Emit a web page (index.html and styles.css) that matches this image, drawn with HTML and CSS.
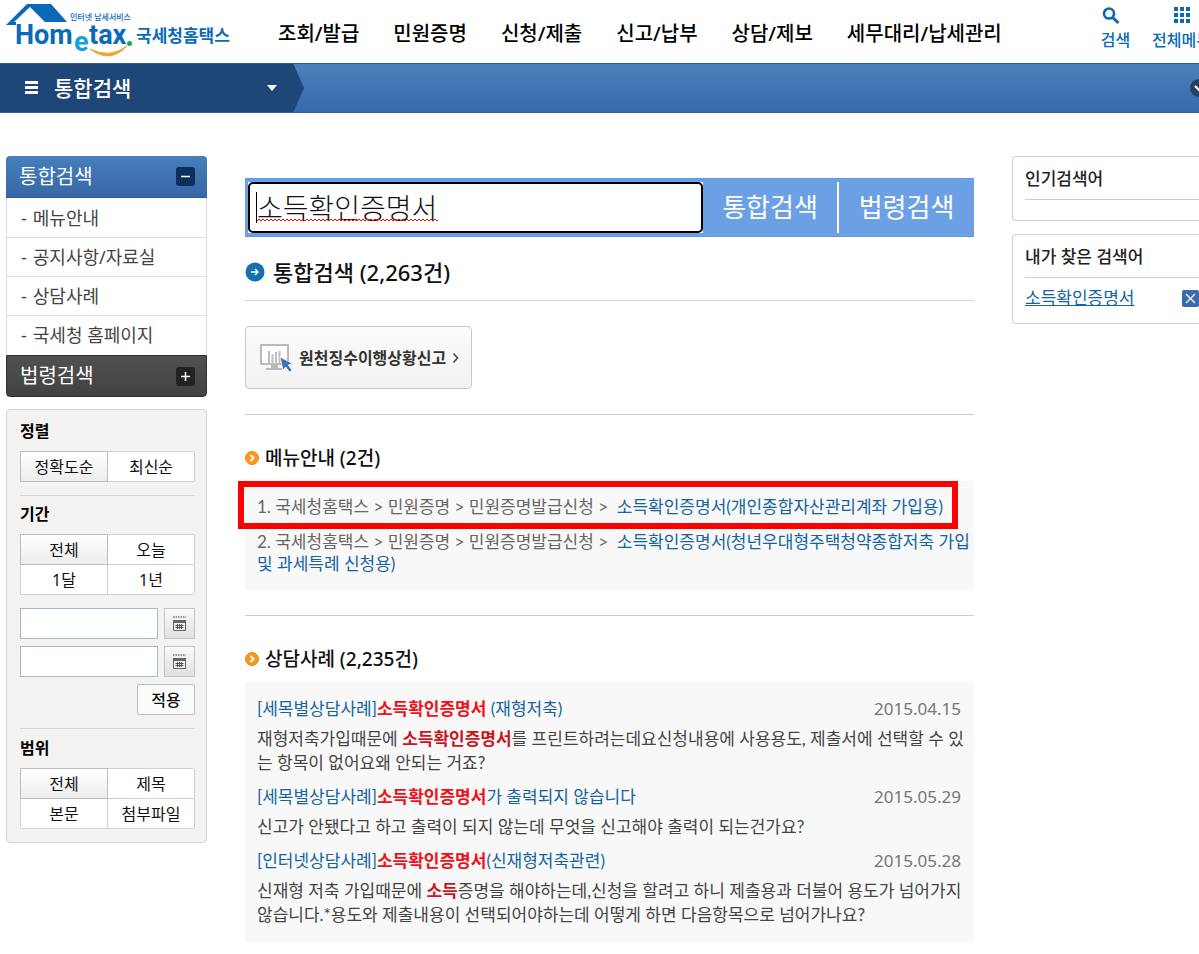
FILE: index.html
```html
<!DOCTYPE html>
<html lang="ko">
<head>
<meta charset="utf-8">
<meta name="viewport" content="width=device-width, initial-scale=1">
<title>통합검색 - 국세청홈택스</title>
<link rel="stylesheet" href="styles.css">
</head>
<body>
<header class="top">
  <a class="logo" href="#" aria-label="국세청홈택스">
    <svg width="236" height="60" viewBox="0 0 236 60">
      <path d="M6 25 L27 4 H51 L67 22 H45 L30 7 L14 22 H16 V25Z" fill="#0a6ab8"/>
      <text class="logo-tag" x="70" y="20">인터넷 납세서비스</text>
      <text class="logo-word" x="15" y="44">Hom</text>
      <text class="logo-e" x="74" y="51">e</text>
      <text class="logo-word" x="89" y="44">tax</text>
      <circle cx="129.500" cy="43.500" r="2.500" fill="#1fa84c"/>
      <path d="M90 49 Q110 64 127 46 Q110 59 90 49Z" fill="#f6a02c" stroke="#f6a02c" stroke-width="1"/>
      <text class="logo-name" x="136" y="42">국세청홈택스</text>
    </svg>
  </a>
  <nav class="gnb">
    <a href="#">조회/발급</a>
    <a href="#">민원증명</a>
    <a href="#">신청/제출</a>
    <a href="#">신고/납부</a>
    <a href="#">상담/제보</a>
    <a href="#">세무대리/납세관리</a>
  </nav>
  <div class="tools">
    <a href="#" class="tool">
      <svg width="20" height="20" viewBox="0 0 20 20" fill="none" stroke="#0a6ab8"><circle cx="8" cy="7.500" r="5" stroke-width="2.600"/><path d="M11.500 11.500 L17.500 17" stroke-width="3"/></svg>
      <span>검색</span>
    </a>
    <a href="#" class="tool">
      <svg width="20" height="20" viewBox="0 0 20 20" fill="#0a6ab8"><path d="M2 1h4v4H2zM8 1h4v4H8zM14 1h4v4h-4zM2 7h4v4H2zM8 7h4v4H8zM14 7h4v4h-4zM2 13h4v4H2zM8 13h4v4H8zM14 13h4v4h-4z"/></svg>
      <span>전체메뉴</span>
    </a>
  </div>
</header>

<div class="crumb">
  <button class="crumb-menu" type="button">
    <svg width="13" height="14" viewBox="0 0 13 14" fill="#fff"><path d="M0 0h13v3H0zM0 5h13v3H0zM0 10h13v3H0z"/></svg>
    <span>통합검색</span>
    <svg class="caret" width="10" height="6" viewBox="0 0 10 6" fill="#fff"><path d="M0 0h10L5 6z"/></svg>
  </button>
  <button class="crumb-toggle" type="button" aria-label="펼치기">
    <svg width="18" height="18" viewBox="0 0 18 18"><circle cx="9" cy="9" r="9" fill="#23405f"/><path d="M5 7l4 4 4-4" fill="none" stroke="#fff" stroke-width="2"/></svg>
  </button>
</div>

<div class="page">
  <aside class="side">
    <nav class="lnb">
      <h2 class="lnb-head">통합검색
        <button type="button" class="fold" aria-label="접기"><svg width="19" height="19" viewBox="0 0 19 19"><path d="M5 9.500h9" stroke="#fff" stroke-width="1.500"/></svg></button>
      </h2>
      <ul>
        <li><a href="#">메뉴안내</a></li>
        <li><a href="#">공지사항/자료실</a></li>
        <li><a href="#">상담사례</a></li>
        <li><a href="#">국세청 홈페이지</a></li>
      </ul>
      <h2 class="lnb-head lnb-dark">법령검색
        <button type="button" class="fold" aria-label="펼치기"><svg width="19" height="19" viewBox="0 0 19 19"><path d="M5 9.500h9M9.500 5v9" stroke="#fff" stroke-width="1.500"/></svg></button>
      </h2>
    </nav>

    <form class="filter">
      <section>
        <h3>정렬</h3>
        <div class="choices">
          <button type="button" class="on">정확도순</button><button type="button">최신순</button>
        </div>
      </section>
      <section>
        <h3>기간</h3>
        <div class="choices">
          <button type="button" class="on">전체</button><button type="button">오늘</button>
          <button type="button">1달</button><button type="button">1년</button>
        </div>
        <div class="date-row">
          <input type="text" aria-label="시작일">
          <button type="button" class="cal" aria-label="시작일 선택"><svg width="15" height="16" viewBox="0 0 15 16"><path d="M1 1h13" stroke="#777" stroke-width="1.500" stroke-dasharray="1.500 1"/><path d="M1.500 4.500h12v10h-12z" fill="#eee" stroke="#666"/><path d="M1 4h13v3H1z" fill="#666"/><path d="M3.500 9.500h8M3.500 11.500h8M5.500 8v5M7.500 8v5M9.500 8v5" stroke="#555" stroke-width="1"/></svg></button>
        </div>
        <div class="date-row">
          <input type="text" aria-label="종료일">
          <button type="button" class="cal" aria-label="종료일 선택"><svg width="15" height="16" viewBox="0 0 15 16"><path d="M1 1h13" stroke="#777" stroke-width="1.500" stroke-dasharray="1.500 1"/><path d="M1.500 4.500h12v10h-12z" fill="#eee" stroke="#666"/><path d="M1 4h13v3H1z" fill="#666"/><path d="M3.500 9.500h8M3.500 11.500h8M5.500 8v5M7.500 8v5M9.500 8v5" stroke="#555" stroke-width="1"/></svg></button>
        </div>
        <button type="button" class="apply">적용</button>
      </section>
      <section>
        <h3>범위</h3>
        <div class="choices">
          <button type="button" class="on">전체</button><button type="button">제목</button>
          <button type="button">본문</button><button type="button">첨부파일</button>
        </div>
      </section>
    </form>
  </aside>

  <main class="content">
    <form class="search">
      <div class="field">
        <input type="text" value="소득확인증명서" aria-label="검색어" spellcheck="false">
        <svg class="squiggle" width="181" height="4"><defs><pattern id="wave" width="4" height="4" patternUnits="userSpaceOnUse"><path d="M0 3L2 1L4 3" fill="none" stroke="#f00" stroke-width="1"/></pattern></defs><rect width="181" height="4" fill="url(#wave)"/></svg>
        <span class="cursor"></span>
      </div>
      <button type="submit">통합검색</button>
      <button type="button">법령검색</button>
    </form>

    <h1>
      <svg width="20" height="20" viewBox="0 0 20 20"><circle cx="10" cy="10" r="9.500" fill="#1670b0"/><path d="M6 10h7M10 7l3 3-3 3" fill="none" stroke="#fff" stroke-width="1.500"/></svg>
      <span>통합검색 (2,263건)</span>
    </h1>

    <div class="shortcut-row">
      <button type="button" class="shortcut">
        <svg width="34" height="30" viewBox="0 0 34 30"><path d="M2 2h27v19H2z" fill="#fff" stroke="#b9b9b9" stroke-width="2" stroke-linejoin="round"/><path d="M10 8v13M13.500 11v10M17 9v12M20.500 8v13" stroke="#bdbdbd" stroke-width="2"/><path d="M12 22h7v3h-7zM7 25h16v2H7z" fill="#b9b9b9"/><path d="M21 14l3 13 2.800-3 3.700 5 2.500-2-3.800-5 4.200-1.500z" fill="#3b74b8" stroke="#fff" stroke-width=".7"/></svg>
        <span>원천징수이행상황신고</span>
        <svg width="8" height="12" viewBox="0 0 8 12"><path d="M1.500 1.500l4 4.500-4 4.500" fill="none" stroke="#444" stroke-width="1.500"/></svg>
      </button>
    </div>

    <section class="group">
      <h2><svg width="14" height="14" viewBox="0 0 14 14"><circle cx="7" cy="7" r="6.500" fill="#f8981d" stroke="#e9870f"/><path d="M5.500 4l3 3-3 3" fill="none" stroke="#fff" stroke-width="1.800"/></svg><span>메뉴안내 (2건)</span></h2>
      <ol class="panel menus">
        <li>1. 국세청홈택스 &gt; 민원증명 &gt; 민원증명발급신청 &gt;&nbsp; <a href="#">소득확인증명서(개인종합자산관리계좌 가입용)</a></li>
        <li>2. 국세청홈택스 &gt; 민원증명 &gt; 민원증명발급신청 &gt;&nbsp; <a href="#">소득확인증명서(청년우대형주택청약종합저축 가입 및 과세특례 신청용)</a></li>
        <li class="marker" aria-hidden="true"></li>
      </ol>
    </section>

    <section class="group">
      <h2><svg width="14" height="14" viewBox="0 0 14 14"><circle cx="7" cy="7" r="6.500" fill="#f8981d" stroke="#e9870f"/><path d="M5.500 4l3 3-3 3" fill="none" stroke="#fff" stroke-width="1.800"/></svg><span>상담사례 (2,235건)</span></h2>
      <div class="panel cases">
        <article>
          <div class="case-head"><a href="#">[세목별상담사례]<b>소득확인증명서</b> (재형저축)</a><time>2015.04.15</time></div>
          <p>재형저축가입때문에 <b>소득확인증명서</b>를 프린트하려는데요신청내용에 사용용도, 제출서에 선택할 수 있는 항목이 없어요왜 안되는 거죠?</p>
        </article>
        <article>
          <div class="case-head"><a href="#">[세목별상담사례]<b>소득확인증명서</b>가 출력되지 않습니다</a><time>2015.05.29</time></div>
          <p>신고가 안됐다고 하고 출력이 되지 않는데 무엇을 신고해야 출력이 되는건가요?</p>
        </article>
        <article>
          <div class="case-head"><a href="#">[인터넷상담사례]<b>소득확인증명서</b>(신재형저축관련)</a><time>2015.05.28</time></div>
          <p>신재형 저축 가입때문에 <b>소득</b>증명을 해야하는데,신청을 할려고 하니 제출용과 더불어 용도가 넘어가지 않습니다.*용도와 제출내용이 선택되어야하는데 어떻게 하면 다음항목으로 넘어가나요?</p>
        </article>
      </div>
    </section>
  </main>

  <aside class="words">
    <section class="card">
      <h3>인기검색어</h3>
    </section>
    <section class="card">
      <h3>내가 찾은 검색어</h3>
      <div class="word"><a href="#">소득확인증명서</a>
        <button type="button" aria-label="삭제"><svg width="17" height="17" viewBox="0 0 17 17"><rect width="17" height="17" rx="2" fill="#3a6cab"/><path d="M4 4l9 9M13 4l-9 9" stroke="#fff" stroke-width="1.200"/></svg></button>
      </div>
    </section>
  </aside>
</div>
</body>
</html>
```
FILE: styles.css
```css
* { box-sizing: border-box; }
body {
  margin: 0;
  background: #fff;
  color: #333;
  font: 17px/24px "Noto Sans", "Noto Sans CJK KR", sans-serif;
  overflow-x: hidden;
}
h1, h2, h3, p, ul, ol { margin: 0; padding: 0; }
ul, ol { list-style: none; }
a { color: inherit; text-decoration: none; }
button, input { font: inherit; color: inherit; margin: 0; padding: 0; }
button { border: 0; background: none; cursor: pointer; }
svg { display: block; flex: none; }

/* Header */
.top { display: flex; height: 63px; overflow: hidden; white-space: nowrap; }
.logo { flex: none; width: 278px; }
.logo-tag { font-size: 8px; font-weight: 500; fill: #0a6ab8; }
.logo-word { font: 700 27px Roboto, sans-serif; fill: #0a6ab8; }
.logo-e { font: 700 27px Roboto, sans-serif; fill: #12a2dc; }
.logo-name { font-size: 17px; font-weight: 700; fill: #0a6ab8; }
.gnb { display: flex; gap: 34px; padding-top: 19px; color: #000; font-size: 20px; line-height: 30px; font-weight: 500; }
.tools { display: flex; flex: none; gap: 22px; margin-left: auto; margin-right: -12px; padding-top: 6px; color: #0a6ab8; font-size: 16px; line-height: 24px; font-weight: 500; }
.tool { display: flex; flex-direction: column; align-items: center; gap: 2px; }
.tool:first-child { align-items: flex-start; }

/* Blue bar */
.crumb { display: flex; justify-content: space-between; align-items: center; height: 50px; overflow: hidden; background: linear-gradient(#4a80bd, #366aa9); border-top: 1px solid #2c5a92; border-bottom: 1px solid #2c5f9e; }
.crumb-menu { display: flex; align-items: center; width: 304px; height: 50px; padding: 0 27px 0 25px; gap: 16px; background: #1e4676; clip-path: polygon(0 0, 293px 0, 304px 50%, 293px 100%, 0 100%); color: #fff; font-size: 21px; font-weight: 500; }
.caret { margin-left: auto; }
.crumb-toggle { margin-right: -9px; }

/* Columns */
.page { display: grid; grid-template-columns: 201px minmax(0, 1fr) 187px; gap: 38px; align-items: start; padding: 43px 0 12px 6px; }

/* Left menu */
.lnb-head { display: flex; justify-content: space-between; align-items: center; height: 42px; padding: 0 12px 0 13px; border-radius: 4px 4px 0 0; border-bottom: 1px solid #2d5f9f; background: linear-gradient(#477ebb, #3767a6); color: #fff; font-size: 20px; font-weight: 400; }
.fold { background: #0b305f; border-radius: 3px; }
.lnb-dark { border: 1px solid #303030; border-radius: 0 0 4px 4px; background: linear-gradient(#505050, #424242); padding: 0 11px 0 13px; }
.lnb-dark .fold { background: #222; }
.lnb ul { border: solid #dcdcdc; border-width: 0 1px; padding-top: 1px; }
.lnb li { display: flex; gap: 6px; height: 39px; padding-left: 14px; border-bottom: 1px solid #dcdcdc; font-size: 18px; line-height: 38px; color: #444; }
.lnb li:last-child { border-bottom-color: #fff; }
.lnb li::before { content: "-"; }

/* Filter */
.filter { display: flex; flex-direction: column; gap: 13px; margin-top: 12px; padding: 11px 11px 13px 13px; border: 1px solid #d4d4d4; border-radius: 4px; background: #f4f3f2; color: #111; font-size: 16px; }
.filter section + section { border-top: 1px solid #d6d6d6; padding-top: 8px; }
.filter section:last-child { padding-top: 9px; }
.filter h3 { font-size: 16px; line-height: 20px; font-weight: 700; color: #000; padding-bottom: 10px; }
.choices { display: grid; grid-template-columns: 1fr 1fr; gap: 1px; border: 1px solid #d0d0d0; border-radius: 2px; background: #d0d0d0; }
.choices button { height: 29px; background: #fff; line-height: 28px; }
.choices .on { background: linear-gradient(#fff, #ededed); box-shadow: 0 0 0 1px #bdbdbd; }
.date-row { display: flex; gap: 6px; margin-top: 7px; }
.choices + .date-row { margin-top: 13px; }
.date-row input { flex: 1; min-width: 0; height: 31px; border: 1px solid #9eb9d0; background: #fff; }
.cal { display: flex; align-items: center; justify-content: center; width: 31px; height: 31px; border: 1px solid #c4c4c4; background: linear-gradient(#fafafa, #e0e0e0); }
.apply { display: block; width: 58px; height: 31px; margin: 7px 0 0 auto; border: 1px solid #bdbdbd; border-radius: 2px; background: #fafcfc; font-weight: 500; }

/* Search */
.search { display: flex; margin-top: 22px; height: 59px; padding: 3px 0 3px 3px; background: #6ba0e5; border: solid #5b98e6; border-width: 1px 0; }
.field { position: relative; flex: 1; min-width: 0; background: #fff; }
.field input { width: 100%; height: 51px; border: 2px solid #000; border-radius: 5px; padding: 0 7px 2px; background: #fff; color: #111; font-size: 28px; font-weight: 300; }
.squiggle { position: absolute; left: 9px; bottom: 11px; }
.cursor { position: absolute; left: 8px; top: 10px; width: 1px; height: 31px; background: #000; }
.search button { width: 134px; color: #fff; font-size: 26px; line-height: 51px; }
.search button + button { width: 137px; border-left: 2px solid #fff; }

/* Results */
.content h1 { display: flex; align-items: center; gap: 8px; height: 64px; padding-top: 6px; border-bottom: 1px solid #d4d4d4; color: #111; font-size: 22px; font-weight: 500; }
.shortcut-row { padding: 25px 0; border-bottom: 1px solid #ccc; }
.shortcut { display: flex; align-items: center; gap: 6px; height: 63px; padding: 0 11px 0 13px; border: 1px solid #c8c8c8; border-radius: 4px; background: linear-gradient(#fafbfb, #f2f2f1); color: #333; font-size: 16px; font-weight: 700; }
.group { padding: 31px 0 25px; border-bottom: 1px solid #ccc; }
.group:last-child { padding-bottom: 0; border: 0; }
.group h2 { display: flex; align-items: center; gap: 6px; height: 24px; margin-bottom: 11px; color: #111; font-size: 19px; font-weight: 500; }
.panel { position: relative; background: #f8f8f8; padding: 15px 4px 15px 12px; font-family: Lato, "Noto Sans CJK KR", sans-serif; }
.menus { display: flex; flex-direction: column; gap: 13px; line-height: 22px; color: #666; }
.menus a, .case-head a { color: #1464a0; }
.marker { position: absolute; left: -7px; top: 0; right: 16px; height: 48px; border: 6px solid #f00; }
.cases { display: flex; flex-direction: column; gap: 10px; color: #444; }
.case-head { display: flex; justify-content: space-between; margin-bottom: 6px; padding-right: 9px; }
.case-head time { color: #777; font-family: "Noto Sans", sans-serif; }
.case-head b { color: #f01018; }
.cases p b { color: #c8161d; }

/* Right column */
.words { display: flex; flex-direction: column; gap: 13px; }
.card { min-height: 65px; padding: 10px 0 13px 12px; border: 1px solid #d0d0d0; border-right: 0; border-radius: 4px 0 0 4px; }
.card h3 { height: 33px; border-bottom: 1px solid #ccc; font-size: 17px; font-weight: 500; color: #222; }
.word { display: flex; justify-content: space-between; align-items: center; padding-top: 8px; color: #1464a0; }
.word a { text-decoration: underline; }
```
